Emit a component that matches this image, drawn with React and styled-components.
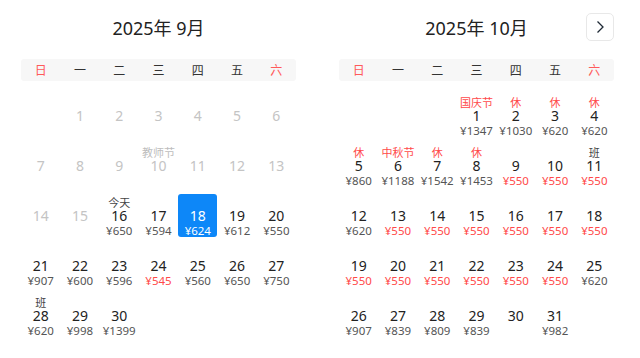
import React from "react";
import styled, { createGlobalStyle } from "styled-components";

const GlobalStyle = createGlobalStyle`
  body {
    margin: 0;
    background: #fff;
    font-family: "Noto Sans", "Noto Sans CJK SC", sans-serif;
    color: #222;
  }
`;

const Page = styled.div`
  display: flex;
  gap: 43px;
  padding: 13px 0 0 21px;
`;

const Month = styled.section`
  width: 275px;
`;

const Header = styled.div`
  display: grid;
  grid-template-columns: 1fr auto 1fr;
  align-items: center;
  height: 28px;
`;

const Title = styled.h2`
  grid-column: 2;
  margin: 0;
  font-size: 18px;
  font-weight: 400;
  color: #222;
  font-family: "Noto Sans", "Noto Sans CJK SC", sans-serif;
`;

const NextButton = styled.button`
  grid-column: 3;
  justify-self: end;
  width: 28px;
  height: 28px;
  padding: 0;
  border: 1px solid #e8e8e8;
  border-radius: 5px;
  background: #fff;
  display: flex;
  align-items: center;
  justify-content: center;
`;

const WeekBar = styled.div`
  margin-top: 18px;
  height: 22px;
  background: #f7f7f7;
  border-radius: 3px;
  display: grid;
  grid-template-columns: repeat(7, 1fr);
  align-items: center;
  text-align: center;
  font-size: 12px;
`;

const WeekDay = styled.span`
  color: ${(p) => (p.$weekend ? "#ff5a5a" : "#333")};
`;

const Days = styled.div`
  margin-top: 13px;
  display: grid;
  grid-template-columns: repeat(7, 1fr);
  row-gap: 7px;
`;

const Cell = styled.div`
  height: 43px;
  box-sizing: border-box;
  padding-top: 2px;
  display: flex;
  flex-direction: column;
  align-items: center;
  border-radius: 3px;
  background: ${(p) => (p.$selected ? "#0d87f8" : "transparent")};
  color: ${(p) => (p.$selected ? "#fff" : p.$disabled ? "#c4c4c4" : "#222")};
`;

const Label = styled.div`
  height: 13px;
  line-height: 13px;
  font-size: 11px;
  white-space: nowrap;
  color: ${(p) => (p.$selected ? "#fff" : p.$tone === "red" ? "#ff4a4a" : p.$tone === "gray" ? "#bdbdbd" : "#444")};
`;

const Num = styled.div`
  height: 14px;
  line-height: 14px;
  font-size: 14px;
`;

const Price = styled.div`
  height: 13px;
  line-height: 13px;
  font-size: 11.5px;
  margin-top: 1px;
  white-space: nowrap;
  color: ${(p) => (p.$selected ? "#fff" : p.$low ? "#ff4a4a" : "#555")};
`;

const WEEK = ["日", "一", "二", "三", "四", "五", "六"];

const september = {
  title: "2025年 9月",
  offset: 1,
  count: 30,
  disabledBefore: 16,
  selected: 18,
  labels: { 10: ["教师节", "gray"], 16: ["今天", "dark"], 28: ["班", "dark"] },
  prices: {
    16: 650, 17: 594, 18: 624, 19: 612, 20: 550,
    21: 907, 22: 600, 23: 596, 24: 545, 25: 560, 26: 650, 27: 750,
    28: 620, 29: 998, 30: 1399,
  },
  low: [24],
};

const october = {
  title: "2025年 10月",
  offset: 3,
  count: 31,
  disabledBefore: 0,
  selected: null,
  labels: {
    1: ["国庆节", "red"], 2: ["休", "red"], 3: ["休", "red"], 4: ["休", "red"],
    5: ["休", "red"], 6: ["中秋节", "red"], 7: ["休", "red"], 8: ["休", "red"],
    11: ["班", "dark"],
  },
  prices: {
    1: 1347, 2: 1030, 3: 620, 4: 620,
    5: 860, 6: 1188, 7: 1542, 8: 1453, 9: 550, 10: 550, 11: 550,
    12: 620, 13: 550, 14: 550, 15: 550, 16: 550, 17: 550, 18: 550,
    19: 550, 20: 550, 21: 550, 22: 550, 23: 550, 24: 550, 25: 620,
    26: 907, 27: 839, 28: 809, 29: 839, 31: 982,
  },
  low: [9, 10, 11, 13, 14, 15, 16, 17, 18, 19, 20, 21, 22, 23, 24],
};

// thin right-pointing chevron, ~6x12
const Chevron = () => (
  <svg width="10" height="14" viewBox="0 0 10 14" fill="none">
    <path d="M2.5 1.5 L8 7 L2.5 12.5" stroke="#1f2a36" strokeWidth="1.3" />
  </svg>
);

const Calendar = ({ data, withNext }) => {
  const cells = [];
  for (let i = 0; i < data.offset; i++) cells.push(<Cell key={"e" + i} />);
  for (let d = 1; d <= data.count; d++) {
    const selected = d === data.selected;
    const disabled = d < data.disabledBefore;
    const label = data.labels[d];
    const price = data.prices[d];
    cells.push(
      <Cell key={d} $selected={selected} $disabled={disabled}>
        <Label $tone={label && label[1]} $selected={selected}>
          {label ? label[0] : ""}
        </Label>
        <Num>{d}</Num>
        {price && (
          <Price $selected={selected} $low={data.low.includes(d)}>
            ¥{price}
          </Price>
        )}
      </Cell>
    );
  }
  return (
    <Month>
      <Header>
        <Title>{data.title}</Title>
        {withNext && (
          <NextButton aria-label="下个月">
            <Chevron />
          </NextButton>
        )}
      </Header>
      <WeekBar>
        {WEEK.map((w, i) => (
          <WeekDay key={w} $weekend={i === 0 || i === 6}>
            {w}
          </WeekDay>
        ))}
      </WeekBar>
      <Days>{cells}</Days>
    </Month>
  );
};

export default function App() {
  return (
    <>
      <GlobalStyle />
      <Page>
        <Calendar data={september} />
        <Calendar data={october} withNext />
      </Page>
    </>
  );
}
